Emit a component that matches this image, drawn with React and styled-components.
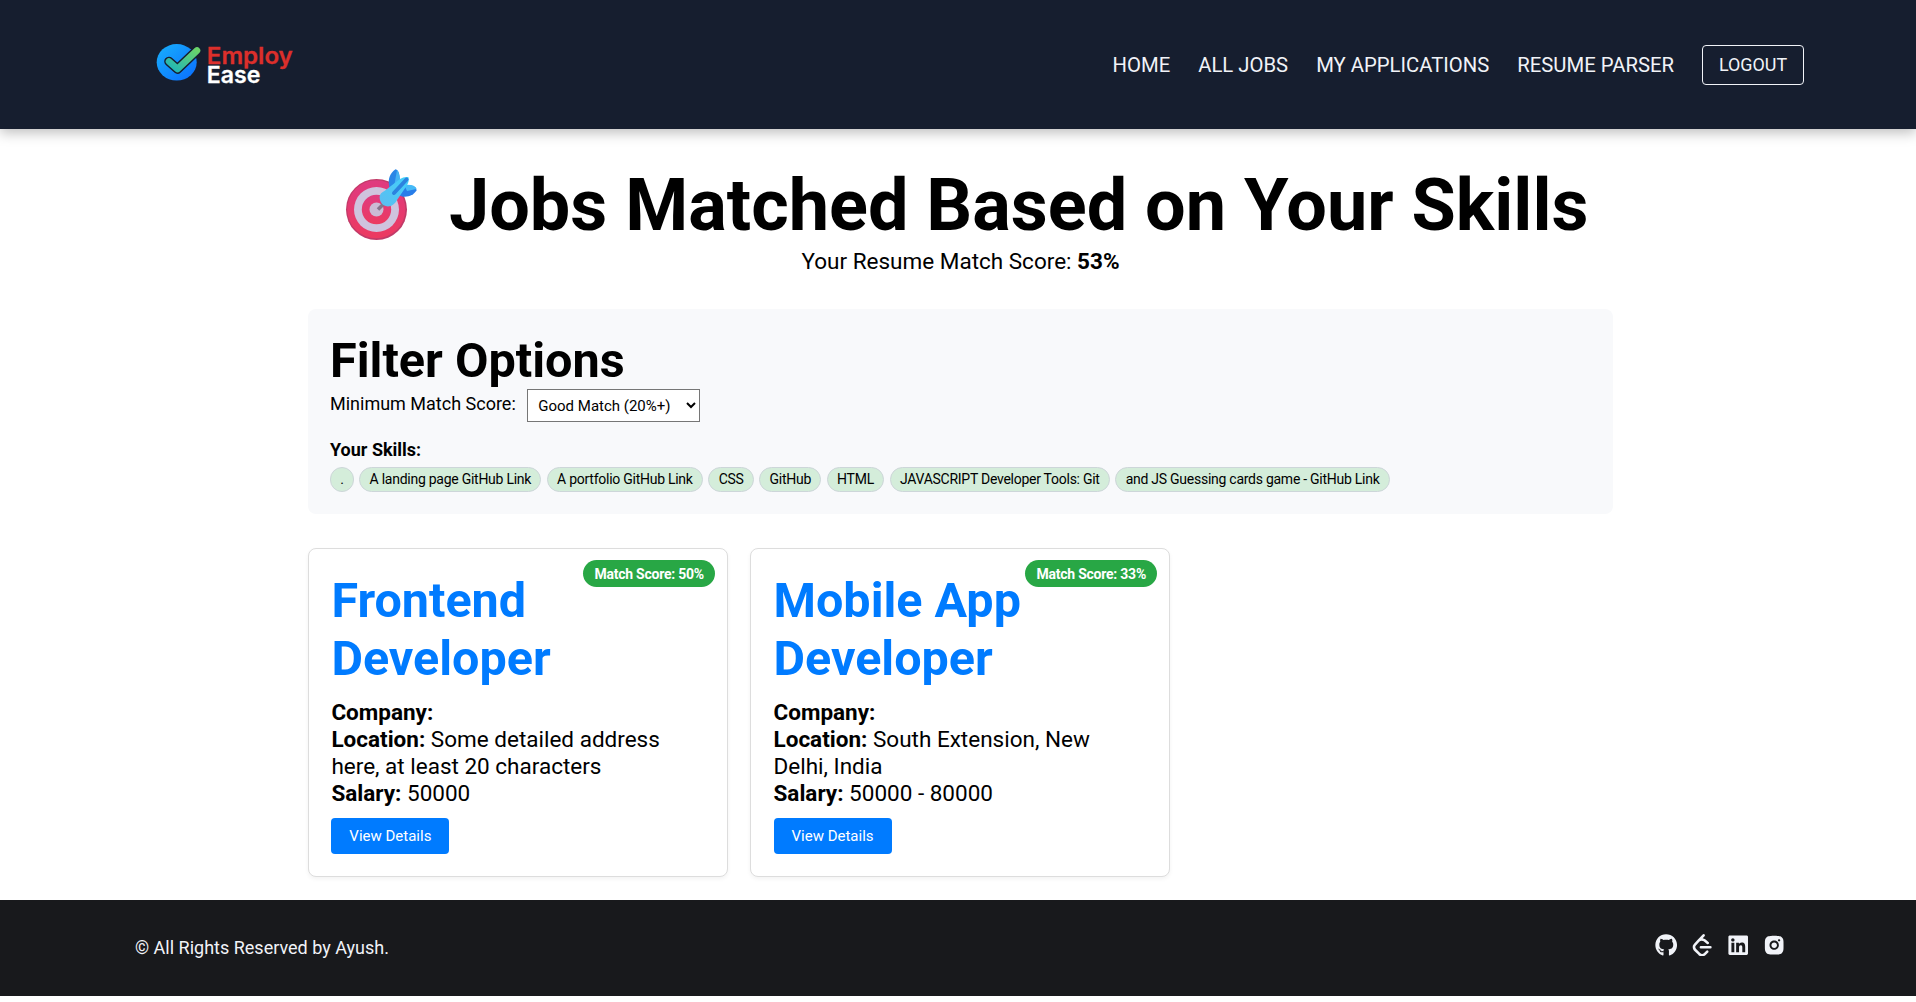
import React from "react";
import styled, { createGlobalStyle } from "styled-components";
import { FaGithub, FaLinkedin } from "react-icons/fa";
import { SiLeetcode } from "react-icons/si";
import { RiInstagramFill } from "react-icons/ri";

const GlobalStyle = createGlobalStyle`
  * { margin: 0; padding: 0; box-sizing: border-box; }
  body {
    background: #fff;
    color: #000;
    font-family: Roboto, "Liberation Sans", sans-serif;
    font-size: 22.5px;
    line-height: 1.2;
    overflow-x: hidden;
  }
  button, select { font-family: inherit; }
`;

const Header = styled.header`
  height: 129px;
  padding: 0 112px 0 135px;
  background: #161e2f;
  box-shadow: 0 4px 12px rgba(0, 0, 0, 0.25);
  display: flex;
  align-items: center;
  justify-content: space-between;
`;

const LogoImage = styled.svg`
  width: 175px;
  height: 129px;
`;

const Nav = styled.nav`
  display: flex;
  align-items: center;
  gap: 28px;
`;

const NavLink = styled.a`
  padding-top: 2px;
  color: #f1f3f8;
  font-size: 20.3px;
  white-space: nowrap;
`;

const LogoutButton = styled.button`
  width: 102px;
  height: 40px;
  border: 1px solid #f1f3f8;
  border-radius: 4px;
  background: transparent;
  color: #f1f3f8;
  font-size: 17.9px;
`;

const Main = styled.main`
  width: 1305px;
  margin-left: 308px;
  padding: 33px 0 23px;
`;

const TitleRow = styled.div`
  height: 84px;
  padding-left: 36px;
  display: flex;
  align-items: center;
  gap: 31px;
`;

const TargetIcon = styled.svg`
  width: 74px;
  height: 74px;
  flex: none;
`;

const Title = styled.h1`
  padding-top: 4px;
  font-size: 72px;
  font-weight: 700;
  line-height: 84px;
  white-space: nowrap;
`;

const MatchScore = styled.p`
  height: 27px;
  margin-top: 2px;
  font-size: 22.5px;
  line-height: 27px;
  text-align: center;
`;

const FilterPanel = styled.section`
  height: 205px;
  margin-top: 34px;
  padding: 22px;
  border-radius: 8px;
  background: #f8f9fb;
`;

const FilterTitle = styled.h2`
  height: 58px;
  font-size: 48.6px;
  line-height: 59px;
`;

const FilterRow = styled.div`
  display: flex;
  align-items: flex-start;
  font-size: 18px;
`;

const FilterLabel = styled.label`
  margin: 4px 11.5px 0 0;
`;

const ScoreSelect = styled.select`
  width: 173px;
  height: 33px;
  padding: 0 6px;
  border: 1px solid #767676;
  background: #fff;
  color: #000;
  font-size: 15px;
`;

const SkillsTitle = styled.p`
  margin: 17px 0 6px;
  font-size: 18px;
  line-height: 22px;
  font-weight: 700;
`;

const SkillList = styled.ul`
  display: flex;
  gap: 5.6px;
  list-style: none;
`;

const Skill = styled.li`
  height: 25px;
  padding: 0 9.2px;
  border: 1px solid #cdd6d9;
  border-radius: 13px;
  background: #d4edda;
  font-size: 14px;
  letter-spacing: -0.26px;
  line-height: 23px;
  white-space: nowrap;
`;

const JobGrid = styled.section`
  width: 1304px;
  margin-top: 34px;
  display: grid;
  grid-template-columns: repeat(3, 1fr);
  gap: 22.4px;
`;

const Card = styled.article`
  position: relative;
  height: 329px;
  padding: 22.4px;
  border: 1px solid #ddd;
  border-radius: 8px;
  background: #fff;
  box-shadow: 0 2px 4px rgba(0, 0, 0, 0.05);
`;

const Badge = styled.span`
  position: absolute;
  top: 11px;
  right: 11.6px;
  height: 27px;
  width: 132px;
  border-radius: 14px;
  background: #28a745;
  color: #fff;
  font-size: 14px;
  letter-spacing: -0.24px;
  font-weight: 700;
  line-height: 28px;
  text-align: center;
`;

const JobTitle = styled.h3`
  padding-top: 1px;
  margin-bottom: 11px;
  color: #007bff;
  font-size: 48.5px;
  line-height: 58px;
`;

const JobLine = styled.p`
  line-height: 27px;
`;

const DetailsButton = styled.button`
  display: block;
  width: 118px;
  height: 36px;
  margin-top: 11px;
  border: 0;
  border-radius: 4px;
  background: #007bff;
  color: #fff;
  font-size: 15px;
`;

const Footer = styled.footer`
  height: 96px;
  padding: 0 130.5px 0 135px;
  background: #18191c;
  color: #f1f3f8;
  display: flex;
  align-items: center;
  justify-content: space-between;
  font-size: 18px;
`;

const Copyright = styled.p`
  padding-bottom: 1px;
`;

const Socials = styled.div`
  display: flex;
  align-items: center;
  gap: 13.6px;
  padding-bottom: 6px;
  font-size: 22.4px;
  svg { display: block; }
`;

const skills = [
  ".",
  "A landing page GitHub Link",
  "A portfolio GitHub Link",
  "CSS",
  "GitHub",
  "HTML",
  "JAVASCRIPT Developer Tools: Git",
  "and JS Guessing cards game - GitHub Link",
];

const jobs = [
  {
    title: "Frontend Developer",
    score: 50,
    location: "Some detailed address here, at least 20 characters",
    salary: "50000",
  },
  {
    title: "Mobile App Developer",
    score: 33,
    location: "South Extension, New Delhi, India",
    salary: "50000 - 80000",
  },
];

function Logo() {
  return (
    <LogoImage viewBox="0 0 175 129">
      <defs>
        <linearGradient id="disc" x1="0" y1="0" x2="1" y2="1">
          <stop offset="0" stopColor="#18b0fb" />
          <stop offset="1" stopColor="#0a6cff" />
        </linearGradient>
        <linearGradient id="tick" x1="0" y1="1" x2="1" y2="0">
          <stop offset="0" stopColor="#1fb5b8" />
          <stop offset="1" stopColor="#6ad36a" />
        </linearGradient>
      </defs>
      <ellipse cx="41.7" cy="62.3" rx="20" ry="18.3" fill="url(#disc)" />
      <g fill="none" strokeLinecap="round" strokeLinejoin="round">
        <path d="M34 61.5 L42.5 69 L62 50.5" stroke="#161e2f" strokeWidth="9.6" />
        <path d="M34 61.5 L42.5 69 L62 50.5" stroke="url(#tick)" strokeWidth="6.6" />
      </g>
      <g fontFamily="Inter, Roboto, sans-serif" fontWeight="600" fontSize="22.6" strokeWidth="0.3">
        <text x="71.8" y="64.2" fill="#dc2f2b" stroke="#dc2f2b" textLength="86" lengthAdjust="spacingAndGlyphs">Employ</text>
        <text x="71.8" y="82.5" fill="#fff" stroke="#fff" textLength="53.5" lengthAdjust="spacingAndGlyphs">Ease</text>
      </g>
    </LogoImage>
  );
}

function Target() {
  return (
    <TargetIcon viewBox="0 0 74 74">
      <defs>
        <linearGradient id="ring" x1="0" y1="0" x2="0" y2="1">
          <stop offset="0" stopColor="#df3a80" />
          <stop offset="1" stopColor="#ec3a60" />
        </linearGradient>
        <linearGradient id="dart" x1="0" y1="1" x2="1" y2="0">
          <stop offset="0" stopColor="#5ebcf0" />
          <stop offset="1" stopColor="#3fd0fa" />
        </linearGradient>
      </defs>
      <circle cx="32.5" cy="42.5" r="30.5" fill="#c23a68" />
      <circle cx="32.3" cy="42.3" r="29" fill="url(#ring)" />
      <circle cx="32.5" cy="42.5" r="22.5" fill="#cfc3de" />
      <circle cx="32.5" cy="42.5" r="14.7" fill="url(#ring)" />
      <circle cx="32.5" cy="42.5" r="7" fill="#cbbbd4" />
      <path d="M34 42.5 L40 36.5" stroke="#85738a" strokeWidth="3.6" />
      <path d="M45 18 C44 12 46 6 51.5 2.3 C54 3 55 5.5 55.5 9 L56 18 L46 25 Z" fill="#2a86e6" />
      <path d="M53 3 C55 5 55.5 8 56 12 L55 18 L50 20 Z" fill="#45b3f3" />
      <path d="M56 18 L67 18.5 C70.5 19 72.5 21 72.6 23.5 C69.5 28 64.5 30.5 58 29.5 L52 27 Z" fill="#287de9" />
      <path d="M60 17.5 L67 18 C70 18.5 72 20 72.5 22 L63 24 Z" fill="#46baf7" />
      <path d="M36 28 C37 25.5 40 24.5 43 22 L56 12 C59 10 62 9.5 64.5 10.2 C65.3 13 64.5 16 62.5 19 L53 33 C50 39 44 41 39.5 38 C36 35.5 35 31 36 28 Z" fill="url(#dart)" />
      <path d="M50 26 L62.5 12.5" stroke="#2c83df" strokeWidth="4" strokeLinecap="round" />
    </TargetIcon>
  );
}

function JobCard({ job }) {
  return (
    <Card>
      <Badge>Match Score: {job.score}%</Badge>
      <JobTitle>{job.title}</JobTitle>
      <JobLine><strong>Company:</strong></JobLine>
      <JobLine><strong>Location:</strong> {job.location}</JobLine>
      <JobLine><strong>Salary:</strong> {job.salary}</JobLine>
      <DetailsButton>View Details</DetailsButton>
    </Card>
  );
}

export default function App() {
  return (
    <>
      <GlobalStyle />
      <Header>
        <Logo />
        <Nav>
          <NavLink>HOME</NavLink>
          <NavLink>ALL JOBS</NavLink>
          <NavLink>MY APPLICATIONS</NavLink>
          <NavLink>RESUME PARSER</NavLink>
          <LogoutButton>LOGOUT</LogoutButton>
        </Nav>
      </Header>
      <Main>
        <TitleRow>
          <Target />
          <Title>Jobs Matched Based on Your Skills</Title>
        </TitleRow>
        <MatchScore>Your Resume Match Score: <strong>53%</strong></MatchScore>
        <FilterPanel>
          <FilterTitle>Filter Options</FilterTitle>
          <FilterRow>
            <FilterLabel htmlFor="score">Minimum Match Score:</FilterLabel>
            <ScoreSelect id="score" defaultValue="20">
              <option value="20">Good Match (20%+)</option>
            </ScoreSelect>
          </FilterRow>
          <SkillsTitle>Your Skills:</SkillsTitle>
          <SkillList>
            {skills.map((skill) => <Skill key={skill}>{skill}</Skill>)}
          </SkillList>
        </FilterPanel>
        <JobGrid>
          {jobs.map((job) => <JobCard key={job.title} job={job} />)}
        </JobGrid>
      </Main>
      <Footer>
        <Copyright>© All Rights Reserved by Ayush.</Copyright>
        <Socials>
          <FaGithub />
          <SiLeetcode />
          <FaLinkedin />
          <RiInstagramFill />
        </Socials>
      </Footer>
    </>
  );
}
